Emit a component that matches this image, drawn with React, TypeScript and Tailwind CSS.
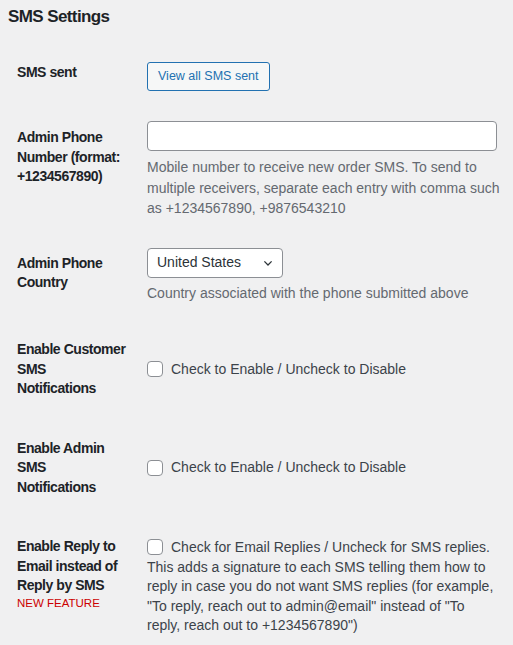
import React from 'react';

const labelCls =
  'w-[130px] shrink-0 pr-[4px] text-[14px] leading-[19.5px] font-semibold tracking-[-0.45px] text-[#1d2327]';
const descCls = 'text-[14px] leading-[20.5px] text-[#646970]';

function Label({ lines, className = '', children }: { lines: string[]; className?: string; children?: React.ReactNode }) {
  return (
    <div className={`${labelCls} ${className}`}>
      {lines.map((l) => (
        <span key={l} className="block whitespace-nowrap">
          {l}
        </span>
      ))}
      {children}
    </div>
  );
}

function Checkbox() {
  return (
    <span className="inline-block w-4 h-4 rounded-[4px] border border-[#8c8f94] bg-white align-[-3px] mr-2 shrink-0" />
  );
}

function Chevron() {
  return (
    <svg className="w-4 h-4" viewBox="0 0 20 20" fill="none" stroke="#2c3338" strokeWidth={1.6}>
      <path d="M5.5 8l4.5 4.5L14.5 8" />
    </svg>
  );
}

export default function App() {
  return (
    <div className="min-h-[645px] w-[513px] bg-[#f0f0f1] font-['Segoe_UI','Liberation_Sans',Arial,sans-serif] text-[#1d2327]">
      <h2 className="pl-[8px] pt-[5px] text-[17px] leading-[23px] font-semibold tracking-[-0.6px]">SMS Settings</h2>

      <div className="ml-[17px] mt-[19px]">
        {/* SMS sent */}
        <div className="flex">
          <Label lines={['SMS sent']} className="pt-[16px]" />
          <div className="py-[15px]">
            <button className="h-[29px] px-[10px] rounded-[3px] border border-[#2271b1] bg-[#f6f7f7] text-[#2271b1] text-[12.5px]">
              View all SMS sent
            </button>
          </div>
        </div>

        {/* Admin phone number */}
        <div className="flex">
          <Label lines={['Admin Phone', 'Number (format:', '+1234567890)']} className="pt-[22px]" />
          <div className="w-[350px] py-[15px]">
            <div className="h-[30px] w-[350px] rounded-[4px] border border-[#8c8f94] bg-white" />
            <p className={`${descCls} mt-[6px] whitespace-nowrap`}>
              Mobile number to receive new order SMS. To send to
              <br />
              multiple receivers, separate each entry with comma such
              <br />
              as +1234567890, +9876543210
            </p>
          </div>
        </div>

        {/* Admin phone country */}
        <div className="flex">
          <Label lines={['Admin Phone', 'Country']} className="pt-[20px]" />
          <div className="w-[350px] pt-[14px] pb-[17px]">
            <div className="h-[30px] w-[136px] rounded-[4px] border border-[#8c8f94] bg-white flex items-center justify-between pl-[9px] pr-[6px] text-[14px] text-[#2c3338]">
              <span>United States</span>
              <Chevron />
            </div>
            <p className={`${descCls} mt-[5px]`}>Country associated with the phone submitted above</p>
          </div>
        </div>

        {/* Enable customer */}
        <div className="flex">
          <Label lines={['Enable Customer', 'SMS', 'Notifications']} className="py-[20px]" />
          <div className="flex items-center py-[15px] text-[14px] text-[#3c434a]">
            <Checkbox />
            <span>Check to Enable / Uncheck to Disable</span>
          </div>
        </div>

        {/* Enable admin */}
        <div className="flex">
          <Label lines={['Enable Admin', 'SMS', 'Notifications']} className="py-[20px]" />
          <div className="flex items-center py-[15px] text-[14px] text-[#3c434a]">
            <Checkbox />
            <span>Check to Enable / Uncheck to Disable</span>
          </div>
        </div>

        {/* Enable reply to email */}
        <div className="flex">
          <Label lines={['Enable Reply to', 'Email instead of', 'Reply by SMS']} className="py-[20px]">
            <span className="block text-[11.5px] leading-[15px] font-normal tracking-normal text-[#c00]">NEW FEATURE</span>
          </Label>
          <div className="w-[352px] pt-[21px] pb-[15px]">
            <p className="text-[14px] leading-[19.6px] text-[#3c434a]">
              <Checkbox />
              Check for Email Replies / Uncheck for SMS replies. This adds a signature to each SMS telling them how to reply in case you do not want SMS replies (for example, "To reply, reach out to admin@email" instead of "To reply, reach out to +1234567890")
            </p>
          </div>
        </div>
      </div>
    </div>
  );
}
